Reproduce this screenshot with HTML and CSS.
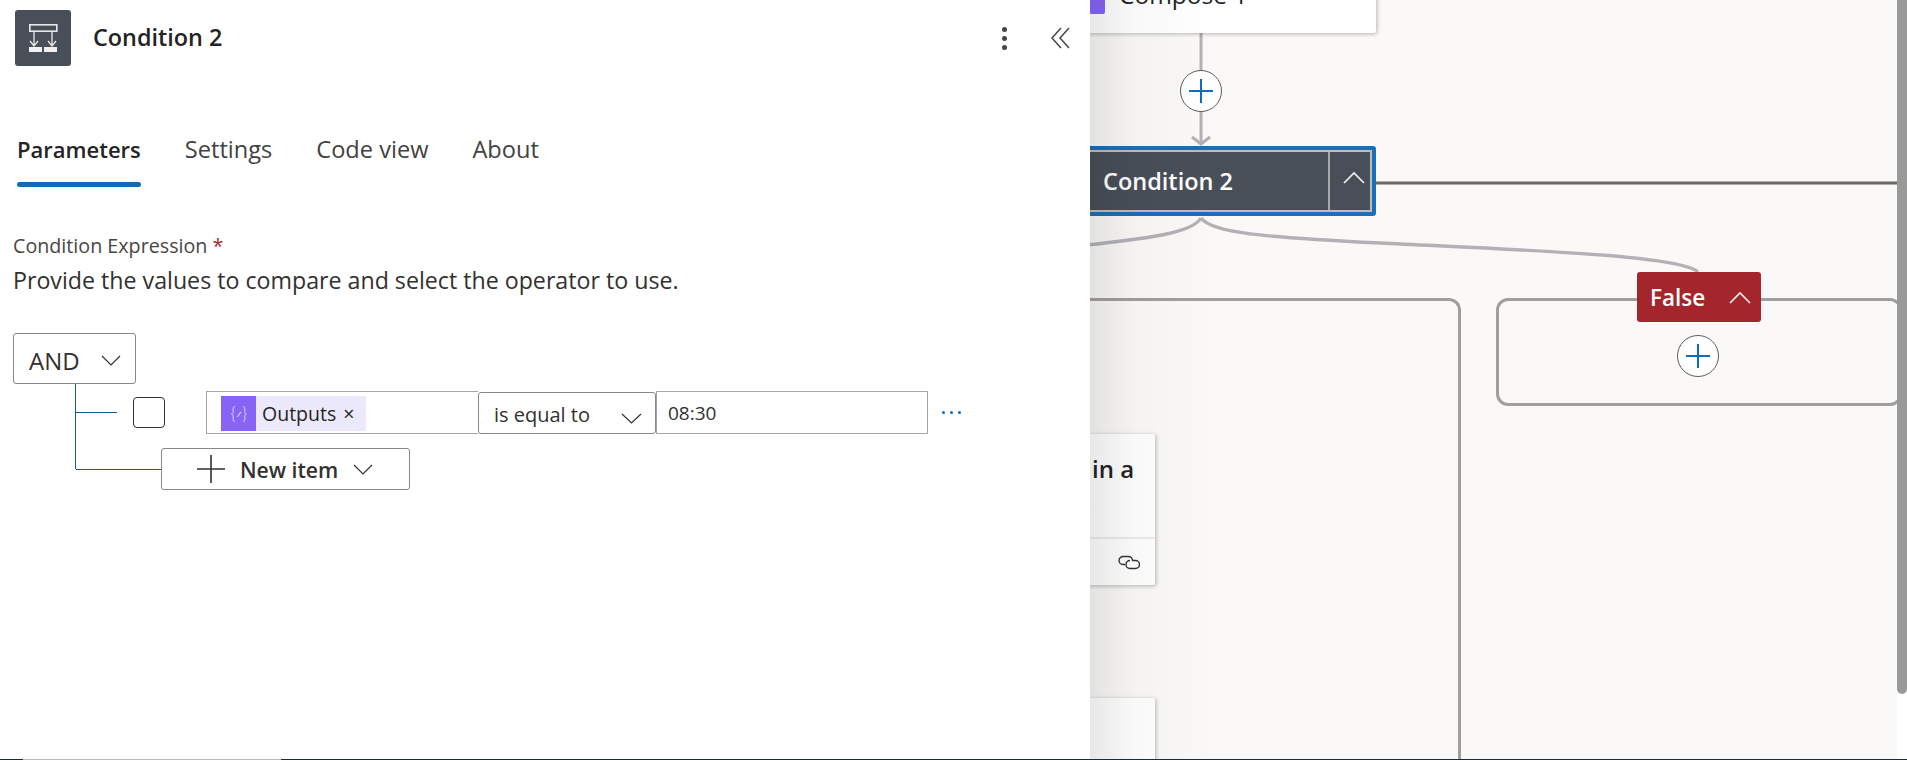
FILE: index.html
```html
<!DOCTYPE html>
<html lang="en">
<head>
<meta charset="utf-8">
<title>Condition 2</title>
<link rel="stylesheet" href="styles.css">
</head>
<body>
<div class="stage">
  <main class="canvas">
    <svg class="wires" width="1907" height="760" viewBox="0 0 1907 760" fill="none">
      <path class="wire" d="M1201 33V71M1201 111V143"/>
      <path class="wire" d="M1192 137L1201 144L1210 137"/>
      <path class="wire wire-curve" d="M1201 218C1192 234 1140 239 1088 245"/>
      <path class="wire wire-curve" d="M1201 218C1212 233 1262 237 1380 243C1520 250 1680 255 1698 272"/>
      <path class="wire-dark" d="M1376 183H1897"/>
    </svg>

    <div class="card card-compose">
      <span class="compose-icon"></span>
      <span class="card-title">Compose 1</span>
    </div>

    <button class="add add-top"><svg width="24" height="24" viewBox="0 0 24 24"><path d="M0 12H24M12 0V24"/></svg></button>

    <div class="node-condition">
      <span class="node-name">Condition 2</span>
      <span class="node-toggle"><svg width="22" height="13" viewBox="0 0 22 13" fill="none"><path d="M1 12L11 2L21 12"/></svg></span>
    </div>

    <div class="scope scope-true"></div>
    <div class="scope scope-false"></div>

    <div class="badge-false">
      <span>False</span>
      <svg width="22" height="13" viewBox="0 0 22 13" fill="none"><path d="M1 12L11 2L21 12"/></svg>
    </div>
    <button class="add add-false"><svg width="24" height="24" viewBox="0 0 24 24"><path d="M0 12H24M12 0V24"/></svg></button>

    <div class="card card-action">
      <div class="card-body"><span class="card-title">in a</span></div>
      <div class="card-foot">
        <svg width="22" height="15" viewBox="0 0 22 15" fill="none"><path d="M7 9.5H5A4 4 0 0 1 5 1.5H10C13 1.5 14.5 3.5 14.5 5.5"/><path d="M14 5.5H17.5A4 4 0 0 1 17.5 13.5H12C9.5 13.5 8 11.5 8 9.5C8 7 10 5.5 12 5.5"/></svg>
      </div>
    </div>
    <div class="card card-next"></div>

    <div class="canvas-end"></div>
    <div class="scrollbar"></div>
  </main>

  <aside class="panel">
    <header class="panel-head">
      <span class="op-icon">
        <svg width="56" height="56" viewBox="0 0 56 56" fill="none">
          <rect x="14.8" y="14.8" width="27" height="6.4" stroke="#e8e8ea" stroke-width="1.6"/>
          <path d="M19 21V36M37 21V36M15 31L19 36L23 31M33 31L37 36L41 31" stroke="#e8e8ea" stroke-width="1.3"/>
          <rect x="14" y="37" width="13" height="5" fill="#f0f0f2"/>
          <rect x="29" y="37" width="13" height="5" fill="#f0f0f2"/>
        </svg>
      </span>
      <h1 class="panel-title">Condition 2</h1>
      <button class="kebab"><i></i><i></i><i></i></button>
      <button class="collapse">
        <svg width="20" height="22" viewBox="0 0 20 22" fill="none"><path d="M11 1L2 11L11 21M19 1L10 11L19 21"/></svg>
      </button>
    </header>

    <nav class="tabs">
      <a class="tab tab-active">Parameters</a>
      <a class="tab">Settings</a>
      <a class="tab">Code view</a>
      <a class="tab">About</a>
    </nav>

    <section class="params">
      <div class="field-label">Condition Expression <span class="req">*</span></div>
      <p class="field-help">Provide the values to compare and select the operator to use.</p>

      <div class="and-box">
        <span>AND</span>
        <svg width="20" height="11" viewBox="0 0 20 11" fill="none"><path d="M1 1L10 10L19 1"/></svg>
      </div>

      <div class="tree">
        <div class="row">
          <span class="branch"></span>
          <span class="check"></span>
          <div class="cond">
            <div class="cell cell-left">
              <span class="token">
                <span class="token-icon">
                  <svg width="20" height="20" viewBox="0 0 20 20" fill="none"><path d="M6 2.5C4.2 2.5 4.2 3.5 4.2 5V8C4.2 9 3.8 10 2.5 10C3.8 10 4.2 11 4.2 12V15C4.2 16.5 4.2 17.5 6 17.5M14 2.5C15.8 2.5 15.8 3.5 15.8 5V8C15.8 9 16.2 10 17.5 10C16.2 10 15.8 11 15.8 12V15C15.8 16.5 15.8 17.5 14 17.5"/><path class="pen" d="M8 12.5L11.7 7.5L12.5 8.2L8.9 13L7.8 13.4Z"/></svg>
                </span>
                <span class="token-text">Outputs</span>
                <span class="token-x">×</span>
              </span>
            </div>
            <div class="op-select">
              <span>is equal to</span>
              <svg width="21" height="11" viewBox="0 0 21 11" fill="none"><path d="M1 1L10.5 10L20 1"/></svg>
            </div>
            <div class="cell cell-right">08:30</div>
          </div>
          <button class="more"><i></i><i></i><i></i></button>
        </div>
        <div class="row row-new">
          <span class="branch"></span>
          <button class="new-item">
            <svg width="28" height="28" viewBox="0 0 28 28"><path d="M0 14H28M14 0V28"/></svg>
            <span>New item</span>
            <svg width="20" height="11" viewBox="0 0 20 11" fill="none"><path d="M1 1L10 10L19 1"/></svg>
          </button>
        </div>
      </div>
    </section>
  </aside>

  <div class="taskbar"><span class="taskbar-thumb"></span></div>
</div>
</body>
</html>
```

FILE: styles.css
```css
* { box-sizing: border-box; }
html, body { margin: 0; padding: 0; background: #fff; }
body { font-family: "Open Sans", "Noto Sans", sans-serif; color: #242424; overflow: hidden; }
button { font: inherit; color: inherit; background: none; border: 0; padding: 0; }

.stage { position: relative; width: 1907px; height: 760px; overflow: hidden; }

/* canvas */
.canvas { position: absolute; inset: 0; background: #faf9f8; }
.wires { position: absolute; left: 0; top: 0; }
.wire { stroke: #b3b1b6; stroke-width: 3; }
.wire-curve { stroke-width: 3.4; }
.wire-dark { stroke: #6b6966; stroke-width: 3; }

.card { position: absolute; background: #fff; box-shadow: 1px 1px 4px rgba(0,0,0,.28); border-radius: 2px; }
.card-title { font-weight: 600; font-size: 22px; color: #242424; }
.card-compose { left: 1000px; top: -40px; width: 376px; height: 73px; }
.card-compose .card-title { position: absolute; left: 119px; top: 20px; font-size: 24.5px; font-weight: 500; line-height: 30px; }
.compose-icon { position: absolute; left: 89px; top: 30px; width: 16px; height: 24px; background: #8764f6; border-radius: 2px; }

.add { position: absolute; width: 42px; height: 42px; border-radius: 50%; background: #fff; border: 1px solid #605e5c; display: flex; align-items: center; justify-content: center; }
.add svg path { stroke: #0f6cbd; stroke-width: 2; }
.add-top { left: 1180px; top: 70px; }
.add-false { left: 1677px; top: 335px; }

.node-condition { position: absolute; left: 1000px; top: 146px; width: 376px; height: 70px; border: 4px solid #1a6fba; border-radius: 3px; background: #484f58; display: flex; align-items: stretch; box-shadow: inset 0 0 0 2px #bdbdbd; }
.node-name { flex: 1; padding-left: 99px; color: #fff; font-size: 23.5px; font-weight: 600; line-height: 62px; }
.node-toggle { width: 42px; margin: 2px 2px 2px 0; border-left: 2px solid #a8a8a8; display: flex; align-items: center; justify-content: center; padding: 0 0 8px 8px; }
.node-toggle path, .badge-false path { stroke: #f2f2f2; stroke-width: 1.6; }

.scope { position: absolute; border: 3px solid #a19f9d; border-radius: 12px; }
.scope-true { left: 1000px; top: 298px; width: 461px; height: 520px; }
.scope-false { left: 1496px; top: 298px; width: 406px; height: 108px; }

.badge-false { position: absolute; left: 1637px; top: 272px; width: 124px; height: 50px; background: #a4262c; border-radius: 3px; color: #fff; font-size: 22.5px; font-weight: 600; display: flex; align-items: center; justify-content: space-between; padding: 0 10px 0 13px; }

.card-action { left: 1000px; top: 434px; width: 155px; height: 151px; display: flex; flex-direction: column; }
.card-body { height: 105px; padding: 14px 0 0 92px; border-bottom: 2px solid #edebe9; line-height: 42px; }
.card-action .card-title { font-size: 24px; }
.card-foot { flex: 1; display: flex; justify-content: flex-end; align-items: center; padding: 0 15px 0 0; }
.card-foot path { stroke: #333; stroke-width: 1.4; }
.card-next { left: 1000px; top: 698px; width: 155px; height: 90px; }

.scrollbar { position: absolute; left: 1897px; top: 0; width: 10px; height: 694px; background: #999; border-radius: 0 0 5px 5px; }
.canvas-end { position: absolute; left: 1897px; top: 0; width: 10px; height: 760px; background: #fff; }

/* side panel */
.panel { position: absolute; left: 0; top: 0; width: 1090px; height: 760px; background: #fff; display: flex; flex-direction: column; }
.panel::after { content: ""; position: absolute; left: 100%; top: 0; width: 130px; height: 100%; background: linear-gradient(to right, rgba(0,0,0,.09), rgba(0,0,0,.025) 35%, rgba(0,0,0,0)); pointer-events: none; }

.panel-head { display: flex; align-items: center; height: 76px; padding: 0 20px 0 15px; }
.op-icon { width: 56px; height: 56px; background: #484f58; border-radius: 3px; display: block; }
.op-icon svg { display: block; }
.panel-title { margin: 0 0 2px 22px; font-size: 23.4px; font-weight: 600; color: #242424; }
.kebab { margin-left: auto; margin-right: 43px; display: flex; flex-direction: column; align-items: center; gap: 4px; width: 5px; }
.kebab i { display: block; width: 5px; height: 5px; border-radius: 50%; background: #484644; }
.collapse { display: flex; }
.collapse path { stroke: #484644; stroke-width: 1.5; }

.tabs { display: flex; gap: 44px; padding: 34px 0 0 17px; }
.tab { display: block; font-size: 23.6px; line-height: 30px; color: #424242; padding: 24px 0 0; position: relative; height: 77px; }
.tab-active { font-size: 22px; font-weight: 600; color: #242424; }
.tab-active::after { content: ""; position: absolute; left: 0; right: 0; bottom: 0; height: 5px; border-radius: 3px; background: #0f6cbd; }

.params { padding: 46px 0 0 13px; display: flex; flex-direction: column; align-items: flex-start; }
.field-label { font-size: 19.7px; line-height: 26px; color: #484644; }
.req { color: #a4262c; }
.field-help { margin: 6px 0 0; font-size: 23.2px; line-height: 30px; color: #323130; }

.and-box { margin-top: 38px; width: 123px; height: 51px; border: 1px solid #8a8886; border-radius: 3px; display: flex; align-items: center; justify-content: space-between; padding: 4px 14px 0 15px; font-size: 24px; color: #323130; }
.and-box path, .new-item svg:last-child path { stroke: #323130; stroke-width: 1.2; }

.tree { margin-left: 62px; border-left: 1px solid #1b5a86; width: 900px; height: 85px; position: relative; }
.row { display: flex; align-items: center; }
.row:first-child { padding-top: 7px; height: 50px; }
.branch { width: 41px; height: 1px; background: #1b5a86; flex: none; }
.check { margin-left: 16px; width: 32px; height: 31px; border: 1px solid #323130; border-radius: 4px; }
.cond { margin-left: 41px; display: flex; height: 43px; align-items: stretch; }
.cell { border: 1px solid #a6a6a6; background: #fff; font-size: 20px; }
.cell-left { width: 272px; padding: 4px 0 0 14px; border-right: 0; }
.cell-right { width: 272px; padding-left: 11px; display: flex; align-items: center; color: #323130; font-size: 19px; }
.token { display: inline-flex; width: 145px; height: 35px; background: #ede9fd; align-items: center; font-size: 19.5px; color: #242424; }
.token-icon { width: 35px; height: 35px; background: #8764f6; display: flex; align-items: center; justify-content: center; }
.token-icon path { stroke: #ddd2ff; stroke-width: 1; }
.token-icon .pen { fill: #ddd2ff; stroke: none; }
.token-text { margin-left: 6px; }
.token-x { margin-left: 7px; }
.op-select { width: 178px; margin-top: 1px; border: 1px solid #8a8886; border-radius: 3px; display: flex; align-items: center; justify-content: space-between; padding: 2px 13px 0 15px; font-size: 20px; color: #323130; }
.op-select svg { margin-top: 8px; }
.op-select path { stroke: #323130; stroke-width: 1.2; }
.more { margin-left: 14px; display: flex; gap: 5px; }
.more i { display: block; width: 3px; height: 3px; border-radius: 50%; background: #0f6cbd; }

.row-new { position: absolute; left: 0; top: 64px; }
.row-new .branch { width: 85px; }
.new-item { width: 249px; height: 42px; border: 1px solid #8a8886; border-radius: 3px; display: flex; align-items: center; padding: 0 0 0 35px; font-size: 21.2px; font-weight: 600; color: #323130; background: #fff; }
.new-item svg:first-child path { stroke: #323130; stroke-width: 1.6; }
.new-item span { margin-left: 15px; margin-right: 15px; }

.taskbar { position: absolute; left: 0; right: 0; bottom: 0; height: 1px; background: #1f2a33; z-index: 3; }
.taskbar-thumb { display: block; margin-left: 23px; width: 258px; height: 1px; background: #bbb; }
```
